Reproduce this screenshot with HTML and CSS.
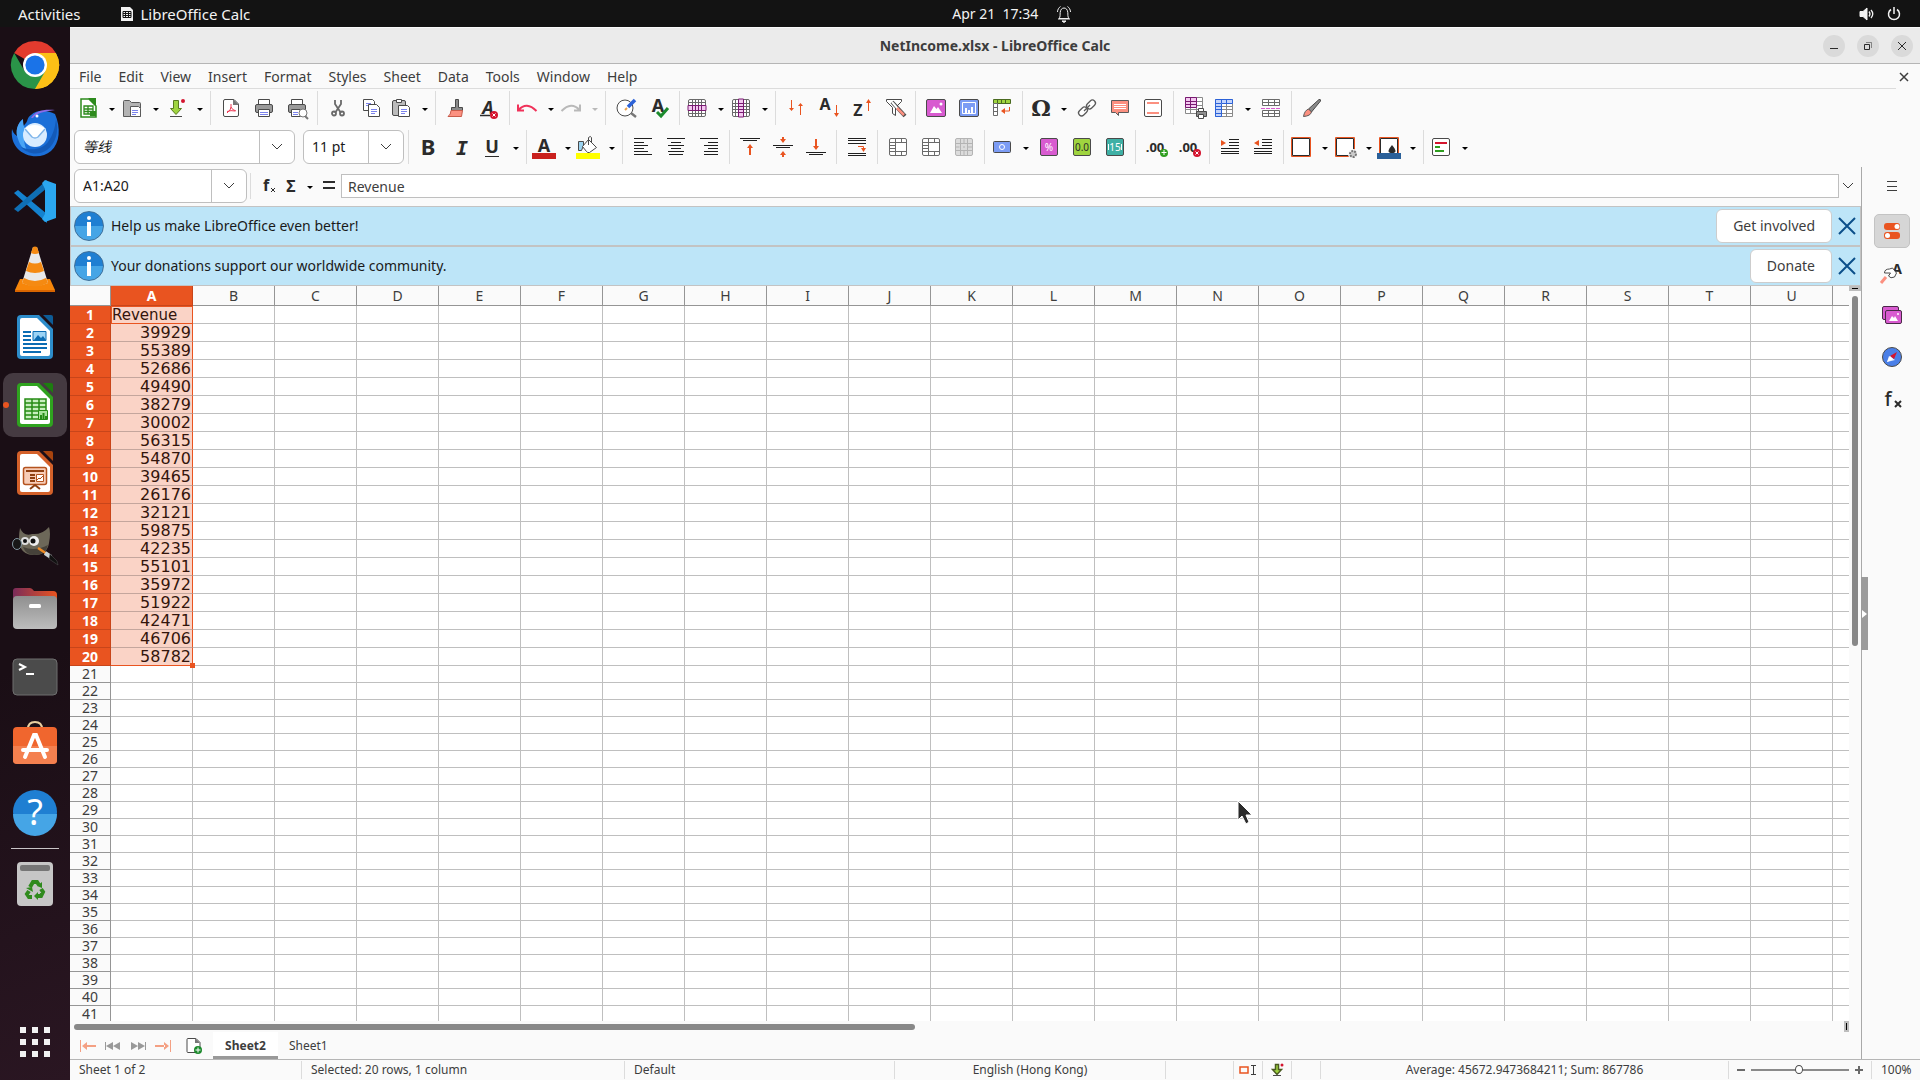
FILE: index.html
```
<!DOCTYPE html>
<html lang="en">
<head>
  <meta charset="UTF-8" />
  <meta name="viewport" content="width=device-width, initial-scale=1.0" />
  <title>NetIncome.xlsx - LibreOffice Calc</title>
  <link rel="stylesheet" href="styles.css">
</head>
<body>
  <header class="topbar">
    <div class="top-left">
      <button class="activities">Activities</button>
      <button class="app-menu">
        <svg width="13" height="14" viewBox="0 0 13 14"><path fill="#f2f2f2" d="M1 0h9l3 3v11H1z"/><path fill="none" stroke="#131313" d="M3 4.500h8v6H3zM3 6.500h8M3 8.500h8M5.500 4.500v6M8.500 4.500v6"/></svg>
        LibreOffice Calc
      </button>
    </div>
    <button class="clock">Apr 21&nbsp; 17:34
      <svg width="16" height="18" viewBox="0 0 16 18" fill="none" stroke="#f2f2f2"><path d="M3 13.500c1.500-1.500 1-4 1.200-6C4.500 4.500 6 3 8 3s3.500 1.500 3.800 4.500c.2 2-.3 4.500 1.200 6zM2 14h12M1.500 7C1.500 4.500 3 2.500 4.500 1.500M14.500 7c0-2.500-1.500-4.500-3-5.500"/><path fill="#f2f2f2" d="M6 16h4l-2 1.500z"/></svg>
    </button>
    <div class="tray">
      <svg width="16" height="14" viewBox="0 0 16 14" fill="none" stroke="#f2f2f2"><path fill="#f2f2f2" d="M1 4.500h3L8 1v12L4 9.500H1z"/><path d="M10 4.500q2 2.500 0 5M12 3q3.500 4 0 8" stroke-width="1.300"/></svg>
      <svg width="16" height="14" viewBox="0 0 16 14" fill="none" stroke="#f2f2f2" stroke-width="1.500"><path d="M5 2.500a5.500 5.500 0 1 0 6 0M8 0v7"/></svg>
    </div>
  </header>

  <div class="desktop">
    <nav class="dock" aria-label="Dock">
      <button class="app" aria-label="Chrome"><svg viewBox="0 0 48 48"><path fill="#e33b2e" d="M24 24 3.200 12A24 24 0 0 1 44.800 12z"/><path fill="#fcc016" d="M24 24 44.800 12A24 24 0 0 1 24 48z"/><path fill="#fcc016" d="M24 12h20.800A24 24 0 0 1 24 48l10.400-18z"/><path fill="#2a9448" d="M3.200 12 13.600 30 24 36l10.400-6L24 48A24 24 0 0 1 3.200 12z"/><circle cx="24" cy="24" r="12" fill="#fff"/><circle cx="24" cy="24" r="9.600" fill="#1a73e8"/></svg></button>
      <button class="app" aria-label="Thunderbird"><svg viewBox="0 0 48 48"><path fill="#1b6fd8" d="M1 20c-1 8 1 14 5 19 9 10 25 11 34 3 9-8 10-23 4-37C37 1 26 0 20 6c-4 3-3 5-5 8-4 4-4 8-3 11-2-4-2-9 0-15-5 4-7 10-6 17-3-2-4-4-5-7z"/><path fill="#4aa4f5" d="M12 10c-6 5-8 12-5 20 2 6 5 10 10 13-5-8-5-16-1-22-3-2-4-6-4-11z"/><path fill="#135ab8" d="M45 10c3 12 0 24-9 31-9 6-20 4-26-3 9 4 21 3 27-5 5-7 7-14 8-23z"/><path fill="#8c6be8" d="M20 9c4-7 12-9 24-8-9 1-19 3-22 8z"/><circle cx="24" cy="26" r="12" fill="#d9ecff"/><path fill="#fff" d="M13 20q10-8 22 0l-8 8q-3 2-6 0z"/><path fill="none" stroke="#7db4ea" stroke-width="1.500" d="m14 20 7 8q3 2 6 0l7-8"/><circle cx="26" cy="7" r="1.500" fill="#fff"/></svg></button>
      <button class="app" aria-label="Visual Studio Code"><svg viewBox="0 0 48 48"><path fill="#1482cf" d="m3 16 4-3 29 24v9z"/><path fill="#0f6fb5" d="m3 32 4 3 29-24V3z"/><path fill="#2ba7f0" d="m34 3 11 4v34l-11 4-3-3 3-5V12l-3-6z"/></svg></button>
      <button class="app" aria-label="VLC"><svg viewBox="0 0 48 48"><path fill="#f7860a" d="M9 34h30l5 11v2H4v-2z"/><path fill="#d96500" d="M4 45h40v2H4z"/><path fill="#e9e9e9" d="M22 2h4l11 36q-13 6-26 0z"/><path fill="#f58a12" d="M22 2q2-1 4 0l2 6q-4 2-8 0zM18 17q6 3 12 0l3 9q-9 4-18 0zM13 33q11 6 22 0l2 5q-13 7-26 0z"/></svg></button>
      <button class="app" aria-label="LibreOffice Writer"><svg viewBox="0 0 48 48"><rect x="6" y="2" width="36" height="44" rx="4" fill="#2d8dcb"/><path fill="#1c0f17" d="M27 1h16v16z"/><path fill="#0d5c97" d="M32 2h8q2 0 2 2v8z"/><path fill="#fff" d="M11 5h15l13 13v23q0 2-2 2H11q-2 0-2-2V7q0-2 2-2z"/><path stroke="#0b6cb3" stroke-width="2" d="M12 19h8M12 23h8M12 27h8M12 31h24M12 35h24M12 39h18"/><path fill="#9bd3f5" stroke="#0b6cb3" d="M22 18.500h13v9H22z"/><path fill="#0b6cb3" d="m23 27 4-5 3 3 2-2 3 4z"/></svg></button>
      <button class="app active" aria-label="LibreOffice Calc"><svg viewBox="0 0 48 48"><rect x="6" y="2" width="36" height="44" rx="4" fill="#2fa31f"/><path fill="#453a41" d="M27 1h16v16z"/><path fill="#1d7d10" d="M32 2h8q2 0 2 2v8z"/><path fill="#fff" d="M11 5h15l13 13v23q0 2-2 2H11q-2 0-2-2V7q0-2 2-2z"/><path fill="#c8efbf" stroke="#268c15" stroke-width="1.500" d="M14 18h21v20H14zM14 22h21M14 26h21M14 30h21M14 34h21M21 18v20M28 18v20"/><path fill="#a9e39b" stroke="#268c15" d="M27.500 29.500h9v9h-9z"/><path stroke="#268c15" stroke-width="2" d="M30 38v-4M32.500 38v-6M35 38v-3"/></svg></button>
      <button class="app" aria-label="LibreOffice Impress"><svg viewBox="0 0 48 48"><rect x="6" y="2" width="36" height="44" rx="4" fill="#d4612a"/><path fill="#1c0f17" d="M27 1h16v16z"/><path fill="#a8440e" d="M32 2h8q2 0 2 2v8z"/><path fill="#fff" d="M11 5h15l13 13v23q0 2-2 2H11q-2 0-2-2V7q0-2 2-2z"/><rect x="12.500" y="18.500" width="23" height="17" rx="2" fill="#f7cdb8" stroke="#b4531f" stroke-width="1.500"/><path fill="none" stroke="#8e3f12" stroke-width="2" d="M15 22h18M19 26h5M19 29h5M19 32h5M19 40l5-4 5 4"/><path fill="#fff" stroke="#b4531f" d="M25.500 25.500h7v7h-7zM26 31l2-2 1 1 3-3"/></svg></button>
      <button class="app" aria-label="GIMP"><svg viewBox="0 0 48 48"><path fill="#6d6859" d="M9 11q4 9 12 6 10 1 17-7 2 6 0 16-2 12-14 12-10 1-15-8-2-9 0-19z"/><path fill="#46423a" d="M12 30q12 5 25-2-2 10-14 10-8 0-11-8z"/><circle cx="14" cy="24" r="4" fill="#ddd"/><circle cx="23" cy="24" r="5" fill="#eee"/><circle cx="14" cy="24" r="2" fill="#111"/><circle cx="22" cy="24" r="2.500" fill="#111"/><ellipse cx="6" cy="27" rx="4.500" ry="5.500" fill="#171717" stroke="#8296a0"/><path stroke="#ee8a25" stroke-width="2.500" d="m27 31 9 6"/><path stroke="#c9d2d6" stroke-width="4" d="m34 36 6 4"/><path fill="#111" stroke="#555" stroke-width=".5" d="m39 37 7 7 1 4-9-6z"/></svg></button>
      <button class="app" aria-label="Files"><svg viewBox="0 0 48 48"><defs><linearGradient id="fold"><stop stop-color="#7a2c5a"/><stop offset="1" stop-color="#e95420"/></linearGradient><linearGradient id="grey" x2="0" y2="1"><stop stop-color="#8f8f8f"/><stop offset="1" stop-color="#bdbdbd"/></linearGradient></defs><path fill="url(#fold)" d="M5 3h14q2 0 4 3h19q4 0 4 4v12H2V6q0-3 3-3z"/><rect x="2" y="11" width="44" height="33" rx="4" fill="url(#grey)"/><rect x="18" y="19" width="12" height="4" rx="1.500" fill="#fff"/></svg></button>
      <button class="app" aria-label="Terminal"><svg viewBox="0 0 48 48"><rect x="2" y="6" width="44" height="36" rx="4" fill="#4b4b4b" stroke="#6f6f6f"/><path fill="none" stroke="#fff" stroke-width="2" d="m8 11 6 3-6 3M15 21h8"/></svg></button>
      <button class="app" aria-label="Ubuntu Software"><svg viewBox="0 0 48 48"><path fill="none" stroke="#e9cfa0" stroke-width="2" d="M17 8q0-7 7-7t7 7"/><rect x="2" y="6" width="44" height="37" rx="4" fill="#f0662e"/><path fill="#f4804f" d="M2 25h44v14q0 4-4 4H6q-4 0-4-4z"/><path stroke="#fff" stroke-width="4" fill="none" d="m14 36 9-22h2l9 22M12 29h24" stroke-linecap="round"/></svg></button>
      <button class="app" aria-label="Help"><svg viewBox="0 0 48 48"><circle cx="24" cy="23" r="22" fill="#1f7fd2"/><path fill="#45a5e6" d="M2 25h44a22 22 0 0 1-44 0z"/><text x="24" y="36" class="glyph help-mark">?</text></svg></button>
      <hr>
      <button class="app" aria-label="Trash"><svg viewBox="0 0 48 48"><rect x="6" y="2" width="36" height="44" rx="4" fill="#c6c6c6"/><rect x="9" y="5" width="30" height="6" rx="2" fill="#767676"/><g fill="none" stroke="#2f8a1d" stroke-width="4"><path d="m19 27 3-5h4l2 3M30 29l2 3-2 4h-4M21 37h-3l-2-3 2-3"/></g><path fill="#2f8a1d" d="m31 22 0 6-5-2zM27 32v8l-4-4zM15 28l6-1 1 5z"/></svg></button>
      <button class="app grid-btn" aria-label="Show Applications"><svg viewBox="0 0 48 48" fill="#f2f2f2"><path d="M9 9h6v6H9zM21 9h6v6h-6zM33 9h6v6h-6zM9 21h6v6H9zM21 21h6v6h-6zM33 21h6v6h-6zM9 33h6v6H9zM21 33h6v6h-6zM33 33h6v6h-6z"/></svg></button>
    </nav>

    <main class="window">
      <div class="titlebar">
        <h1>NetIncome.xlsx - LibreOffice Calc</h1>
        <div class="win-btns">
          <button aria-label="Minimize"><svg width="22" height="22"><path d="M7 13.500h8"/></svg></button>
          <button aria-label="Restore"><svg width="22" height="22"><path d="M7.500 9.500h5v5h-5z"/><path d="M9 7.500h5.500V13" opacity=".5"/></svg></button>
          <button aria-label="Close"><svg width="22" height="22"><path d="m7 7 8 8M15 7l-8 8"/></svg></button>
        </div>
      </div>

      <div class="menubar">
        <nav>
          <button>File</button><button>Edit</button><button>View</button><button>Insert</button><button>Format</button><button>Styles</button><button>Sheet</button><button>Data</button><button>Tools</button><button>Window</button><button>Help</button>
        </nav>
        <button class="doc-close" aria-label="Close document"><svg width="10" height="10" stroke="#3d3d3d" stroke-width="1.500"><path d="m1 1 8 8M9 1 1 9"/></svg></button>
      </div>

      <!-- standard toolbar -->
      <div class="toolbar">
        <div class="split"><button aria-label="New"><svg class="i" viewBox="0 0 24 24"><path fill="#fff" stroke="#2c8a1c" stroke-width="1.500" d="M5 3h8l7 7v11H5z"/><path fill="#2c8a1c" d="M12 2h8v8z"/><path fill="#fff" stroke="#2c8a1c" stroke-width="1.300" d="M8 10h9v8H8zM8 13h9M8 15.500h9M12 10v8"/><path fill="#2c8a1c" d="M14 15h6v5h-6z"/></svg></button><button class="dd" aria-label="New options"></button></div>
        <div class="split"><button aria-label="Open"><svg class="i" viewBox="0 0 24 24"><path fill="#b4b4b4" stroke="#5a5a5a" d="M3.500 20.500v-15q0-1 1-1h5l2 2h8q1 0 1 1v13z"/><path fill="#fff" stroke="#5a5a5a" d="M10.500 10.500h8l2 2v8h-10z"/><path stroke="#7b83ec" d="M12 14.500h6M12 16.500h6M12 18.500h4"/></svg></button><button class="dd" aria-label="Open options"></button></div>
        <div class="split"><button aria-label="Save"><svg class="i" viewBox="0 0 24 24"><path fill="#9fd43f" stroke="#5a7a20" d="M9.500 4.500h5v8h3L12 18.500l-5.500-6h3z"/><path stroke="#4a4a4a" d="M6 20.500h12"/><circle cx="19" cy="5" r="2" fill="#d4152f"/></svg></button><button class="dd" aria-label="Save options"></button></div>
        <span class="sep"></span>
        <button class="tb" aria-label="Export as PDF"><svg class="i" viewBox="0 0 24 24"><path fill="#fff" stroke="#4a4a4a" d="M6 3.500h9l4.500 4.500v11q0 1.500-1.500 1.500H6q-1.500 0-1.500-1.500V5q0-1.500 1.500-1.500z"/><path fill="#777" d="M14 3v6h6z"/><path fill="none" stroke="#ee3a55" d="M12 8v3q0 3-4 6M12 11q1 3 5 4M8 15.500q4-1.500 8-.5"/></svg></button>
        <button class="tb" aria-label="Print"><svg class="i" viewBox="0 0 24 24"><path fill="#fff" stroke="#4a4a4a" d="M6.500 3.500h11v5h-11z"/><rect x="3.500" y="8.500" width="17" height="8" rx="1.500" fill="#9a9a9a" stroke="#4a4a4a"/><path fill="#fff" stroke="#4a4a4a" d="M6.500 13.500h11v7h-11z"/><path stroke="#7b83ec" d="M8 16.500h8M8 18.500h8"/></svg></button>
        <button class="tb" aria-label="Print preview"><svg class="i" viewBox="0 0 24 24"><path fill="#fff" stroke="#4a4a4a" d="M6.500 3.500h11v5h-11z"/><rect x="3.500" y="8.500" width="17" height="8" rx="1.500" fill="#9a9a9a" stroke="#4a4a4a"/><path fill="#fff" stroke="#4a4a4a" d="M6.500 13.500h9v7h-9z"/><path stroke="#7b83ec" d="M8 16.500h5M8 18.500h5"/><circle cx="18" cy="17" r="4" fill="#fff" stroke="#777"/><path stroke="#777" stroke-width="2" d="m20 20 3 3"/></svg></button>
        <span class="sep"></span>
        <button class="tb" aria-label="Cut"><svg class="i" viewBox="0 0 24 24" fill="none" stroke="#6a6a6a" stroke-width="1.800"><path d="M9 4v4l6 9M15 4v4l-6 9"/><circle cx="8" cy="17.500" r="2"/><circle cx="16" cy="17.500" r="2"/></svg></button>
        <button class="tb" aria-label="Copy"><svg class="i" viewBox="0 0 24 24" fill="#fff" stroke="#4a4a4a"><path d="M4.500 3.500h9l2 2v9h-11z"/><path stroke="#7b83ec" d="M7 7.500h5M7 9.500h2"/><path d="M9.500 8.500h8l3 3v9h-11z"/><path stroke="#7b83ec" d="M12 13.500h6M12 15.500h6M12 17.500h4"/></svg></button>
        <div class="split"><button aria-label="Paste"><svg class="i" viewBox="0 0 24 24" stroke="#4a4a4a"><rect x="3.500" y="4.500" width="13" height="15" rx="1.500" fill="#bbb"/><path fill="#fff" d="M7.500 3.500h5v3h-5zM9.500 9.500h9l2 2v9h-11z"/><path stroke="#7b83ec" d="M12 13.500h6M12 15.500h6M12 17.500h4"/></svg></button><button class="dd" aria-label="Paste options"></button></div>
        <span class="sep"></span>
        <button class="tb" aria-label="Clone formatting"><svg class="i" viewBox="0 0 24 24"><path fill="#8a8a8a" stroke="#4a4a4a" d="M11.500 3.500h3v8h4v3h-11v-3h4z"/><path fill="#fb9080" stroke="#c85b4a" d="M7 14.500h11.500l-1 6H4q3-2 3-6z"/></svg></button>
        <button class="tb" aria-label="Clear formatting"><svg class="i" viewBox="0 0 24 24"><text x="11" y="18" class="glyph big it">A</text><path stroke="#2b2b2b" stroke-width="1.500" d="M3 19.500h10"/><circle cx="17" cy="19" r="4" fill="#d4152f"/><path stroke="#fff" d="m15.500 17.500 3 3M18.500 17.500l-3 3"/></svg></button>
        <span class="sep"></span>
        <div class="split"><button aria-label="Undo"><svg class="i" viewBox="0 0 24 24" fill="none" stroke="#f0325a" stroke-width="2"><path d="M3 8.500v6h6M3.500 14q8-9 18 1"/></svg></button><button class="dd" aria-label="Undo list"></button></div>
        <div class="split off"><button aria-label="Redo"><svg class="i" viewBox="0 0 24 24" fill="none" stroke="#b9b9b9" stroke-width="2"><path d="M21 8.500v6h-6M20.500 14q-8-9-18 1"/></svg></button><button class="dd" aria-label="Redo list"></button></div>
        <span class="sep"></span>
        <button class="tb" aria-label="Find and replace"><svg class="i" viewBox="0 0 24 24"><circle cx="11" cy="12" r="8" fill="#fff" stroke="#4a4a4a"/><path stroke="#777" stroke-width="2.500" d="m17 17 5 4"/><path stroke="#2c62d8" stroke-width="3.500" d="m14 11 7-7"/><path stroke="#e9a04b" stroke-width="2" d="m11 14 2-2"/></svg></button>
        <button class="tb" aria-label="Spelling"><svg class="i" viewBox="0 0 24 24"><text x="11" y="16" class="glyph big">A</text><path fill="none" stroke="#1c8a2c" stroke-width="3" d="m10 16 4 4 7-8"/></svg></button>
        <span class="sep"></span>
        <div class="split"><button aria-label="Row"><svg class="i" viewBox="0 0 24 24" fill="#fff" stroke="#6a6a6a"><rect x="3.500" y="3.500" width="17" height="17" rx="1.500"/><path d="M3.500 6.500h17M3.500 17.500h17M7.500 3.500v17M10.500 3.500v17M13.500 3.500v17M16.500 3.500v17"/><path fill="#f3c8f0" stroke="#7a1a72" d="M3 9.500h18v5H3zM7.500 10v4M10.500 10v4M13.500 10v4M16.500 10v4"/></svg></button><button class="dd" aria-label="Row options"></button></div>
        <div class="split"><button aria-label="Column"><svg class="i" viewBox="0 0 24 24" fill="#fff" stroke="#6a6a6a"><rect x="3.500" y="3.500" width="17" height="17" rx="1.500"/><path d="M3.500 7.500h17M3.500 10.500h17M3.500 13.500h17M3.500 16.500h17M6.500 3.500v17M17.500 3.500v17"/><path fill="#f3c8f0" stroke="#7a1a72" d="M9.500 3v18h5V3zM10 7.500h4M10 10.500h4M10 13.500h4M10 16.500h4"/></svg></button><button class="dd" aria-label="Column options"></button></div>
        <span class="sep"></span>
        <button class="tb" aria-label="Sort"><svg class="i" viewBox="0 0 24 24" fill="#e95420" stroke="#e95420"><path d="M7.500 4v8M16.500 9v10"/><path d="M5 12h5l-2.500 3zM14 10h5l-2.500-3z" stroke="none"/></svg></button>
        <button class="tb" aria-label="Sort ascending"><svg class="i" viewBox="0 0 24 24"><text x="8" y="14" class="glyph mid">A</text><path stroke="#e95420" d="M19.500 9v10"/><path fill="#e95420" d="M17 17h5l-2.500 4z"/></svg></button>
        <button class="tb" aria-label="Sort descending"><svg class="i" viewBox="0 0 24 24"><text x="8" y="20" class="glyph mid">Z</text><path stroke="#e95420" d="M18.500 5v10"/><path fill="#e95420" d="M16 7h5l-2.500-4z"/></svg></button>
        <button class="tb" aria-label="AutoFilter"><svg class="i" viewBox="0 0 24 24"><path fill="#fff" stroke="#4a4a4a" d="M3.500 3.500h15v2l-6 6v8l-3-2v-6l-6-6z"/><path stroke="#4a4a4a" stroke-width="4" d="m9 6 13 14"/><path stroke="#fff" stroke-width="2" d="m9 6 6 7"/><path stroke="#fb9080" stroke-width="2.500" d="m14 12 7 7"/></svg></button>
        <span class="sep"></span>
        <button class="tb" aria-label="Insert image"><svg class="i" viewBox="0 0 24 24"><rect x="2.500" y="3.500" width="19" height="17" rx="1.500" fill="#d85bd0" stroke="#4a4a4a"/><path fill="#fff" d="m6 17 4-7 2.500 3L14 11l4 6z"/><circle cx="17" cy="8" r="1.500" fill="#fff"/></svg></button>
        <button class="tb" aria-label="Insert chart"><svg class="i" viewBox="0 0 24 24"><rect x="2.500" y="3.500" width="19" height="17" rx="1.500" fill="#7c9cf4" stroke="#4a4a4a"/><path fill="none" stroke="#fff" d="M5.500 6.500h13v11h-13z"/><path stroke="#fff" stroke-width="2" d="M9 17v-5M12 17v-3M15 17v-6"/></svg></button>
        <button class="tb" aria-label="Insert pivot table"><svg class="i" viewBox="0 0 24 24"><path fill="#9fd43f" stroke="#4a6a20" d="M3.500 3.500h17v4h-17zM7.500 4v3M11.500 4v3M15.500 4v3"/><path fill="#fff" stroke="#6a6a6a" d="M3.500 7.500h4v12h-4zM4 11.500h3M4 15.500h3"/><path fill="none" stroke="#e95420" d="M19.500 11v4h-6"/><path fill="#e95420" d="M11 15l4-3v6z"/></svg></button>
        <span class="sep"></span>
        <div class="split"><button aria-label="Special character"><svg class="i" viewBox="0 0 24 24"><text x="13" y="20" class="glyph omega">Ω</text></svg></button><button class="dd" aria-label="More characters"></button></div>
        <button class="tb" aria-label="Hyperlink"><svg class="i" viewBox="0 0 24 24" fill="#fff" stroke="#5a5a5a" stroke-width="1.300"><rect x="11" y="5.500" width="10" height="6" rx="3" transform="rotate(-45 16 8.500)"/><rect x="3" y="12.500" width="10" height="6" rx="3" transform="rotate(-45 8 15.500)"/><path d="m9 15 6-6"/></svg></button>
        <button class="tb" aria-label="Comment"><svg class="i" viewBox="0 0 24 24"><path fill="#fb9080" stroke="#5a5a5a" d="M3.500 4.500h17v12h-10v3l-3-3h-4z"/><path stroke="#fff" d="M6 8.500h12M6 10.500h12M6 12.500h12"/></svg></button>
        <button class="tb" aria-label="Headers and footers"><svg class="i" viewBox="0 0 24 24"><rect x="3.500" y="3.500" width="17" height="17" rx="1.500" fill="#fff" stroke="#4a4a4a"/><path stroke="#fb9080" stroke-width="2" d="M6 7h12M6 17h12"/></svg></button>
        <span class="sep"></span>
        <button class="tb" aria-label="Define print area"><svg class="i" viewBox="0 0 24 24" fill="#fff" stroke="#8a8a8a"><path d="M3.500 1.500h17v16h-17zM4 13.500h16M8.500 12v6M14.500 2v16M14 5.500h6M14 9.500h6"/><path fill="#f3c8f0" stroke="#7a1a72" d="M3.500 1.500h11v10h-11zM4 5.500h10M4 8.500h10M8.500 2v9"/><path fill="#8f8f8f" stroke="#4a4a4a" d="M14.500 15.500h10v5h-10z"/><path stroke="#4a4a4a" d="M16.500 12.500h5v3h-5zM16.500 18.500h5v4h-5z"/></svg></button>
        <div class="split"><button aria-label="Freeze"><svg class="i" viewBox="0 0 24 24" fill="#fff" stroke="#8a8a8a"><path d="M3.500 3.500h17v17h-17zM9 10.500h11M9 13.500h11M9 17.500h11M14.500 7v13"/><path fill="#c3d4fb" stroke="#2c62d8" d="M3.500 3.500h17v4h-11v13h-6zM9.500 4v3M14.500 4v3M4 7.500h5M4 10.500h5M4 13.500h5M4 17.500h5"/></svg></button><button class="dd" aria-label="Freeze options"></button></div>
        <button class="tb" aria-label="Split window"><svg class="i" viewBox="0 0 24 24" fill="#fff" stroke="#6a6a6a"><path d="M3.500 3.500h17v6h-17zM3.500 6.500h17M9.500 4v6M15.500 4v6M3.500 14.500h17v6h-17zM3.500 17.500h17M9.500 15v6M15.500 15v6"/><path stroke="#d85bd0" stroke-dasharray="4 1" d="M2 12.500h20"/></svg></button>
        <span class="sep"></span>
        <button class="tb" aria-label="Show draw functions"><svg class="i" viewBox="0 0 24 24"><path fill="#8a8a8a" stroke="#4a4a4a" d="M19 3.500q2-.5 1.500 1.500l-9 11-3-3z"/><path fill="#fb9080" stroke="#5a5a5a" d="M3.500 20.500q1-6 5-7.500l3 3q-1 4-8 4.500z"/></svg></button>
      </div>

      <!-- formatting toolbar -->
      <div class="toolbar format">
        <div class="combo font-name"><input type="text" value="等线" aria-label="Font name"><button aria-label="Font list"><svg class="chev" viewBox="0 0 12 8"><path d="m1 1 5 5 5-5"/></svg></button></div>
        <div class="combo font-size"><input type="text" value="11 pt" aria-label="Font size"><button aria-label="Font size list"><svg class="chev" viewBox="0 0 12 8"><path d="m1 1 5 5 5-5"/></svg></button></div>
        <span class="sep"></span>
        <button class="tb" aria-label="Bold"><svg class="i" viewBox="0 0 24 24"><text x="11" y="20" class="glyph bold">B</text></svg></button>
        <button class="tb" aria-label="Italic"><svg class="i" viewBox="0 0 24 24"><text x="12" y="20" class="glyph ital">I</text></svg></button>
        <div class="split"><button aria-label="Underline"><svg class="i" viewBox="0 0 24 24"><text x="12" y="18" class="glyph big">U</text><path stroke="#2b2b2b" d="M5 21.500h14"/></svg></button><button class="dd" aria-label="Underline options"></button></div>
        <span class="sep"></span>
        <div class="split"><button aria-label="Font color"><svg class="i" viewBox="0 0 24 24"><text x="12" y="17" class="glyph big">A</text><path fill="#c9211e" d="M0 18h24v6H0z"/></svg></button><button class="dd" aria-label="Font colors"></button></div>
        <div class="split"><button aria-label="Highlight color"><svg class="i" viewBox="0 0 24 24"><path fill="#9bd3f0" stroke="#4a4a4a" d="M2.500 15.500v-9h5v4l-2 5z"/><path fill="#fff" stroke="#4a4a4a" d="m12.500 4.500 8 8-7 5q-2 .5-3-1l-4-5z"/><path fill="none" stroke="#4a4a4a" d="M12.500 10V2.500q2-2 3 0v5"/><path fill="#ff0" d="M0 18h24v6H0z"/></svg></button><button class="dd" aria-label="Highlight colors"></button></div>
        <span class="sep"></span>
        <button class="tb" aria-label="Align left"><svg class="i ln" viewBox="0 0 24 24"><path d="M3 3.500h18M3 7.500h10M3 10.500h14M3 13.500h10M3 16.500h14M3 19.500h18"/></svg></button>
        <button class="tb" aria-label="Center"><svg class="i ln" viewBox="0 0 24 24"><path d="M3 3.500h18M7 7.500h10M4 10.500h16M7 13.500h10M4 16.500h16M5 19.500h14"/></svg></button>
        <button class="tb" aria-label="Align right"><svg class="i ln" viewBox="0 0 24 24"><path d="M3 3.500h18M11 7.500h10M7 10.500h14M11 13.500h10M7 16.500h14M7 19.500h14"/></svg></button>
        <span class="sep"></span>
        <button class="tb" aria-label="Align top"><svg class="i ln" viewBox="0 0 24 24"><path d="M2 3.500h20M5 5.500h14"/><path stroke="#e95420" stroke-width="2" d="M12 20v-8"/><path fill="#e95420" stroke="none" d="M9 13h6l-3-4z"/></svg></button>
        <button class="tb" aria-label="Center vertically"><svg class="i ln" viewBox="0 0 24 24"><path d="M2 10.500h20M5 12.500h14"/><path fill="#e95420" stroke="none" d="M11 2h2v2h2l-3 4-3-4h2zM11 22h2v-2h2l-3-4-3 4h2z"/></svg></button>
        <button class="tb" aria-label="Align bottom"><svg class="i ln" viewBox="0 0 24 24"><path d="M2 17.500h20M5 19.500h14"/><path stroke="#e95420" stroke-width="2" d="M12 4v8"/><path fill="#e95420" stroke="none" d="M9 11h6l-3 4z"/></svg></button>
        <span class="sep"></span>
        <button class="tb" aria-label="Wrap text"><svg class="i ln" viewBox="0 0 24 24"><path d="M3 3.500h18M3 5.500h18M3 8.500h18M3 18.500h18M3 20.500h18"/><path stroke="#e95420" d="M13 11.500h5.500v3"/><path fill="#e95420" stroke="none" d="M16 13h5l-2.500 4z"/></svg></button>
        <span class="sep"></span>
        <button class="tb" aria-label="Merge and center"><svg class="i" viewBox="0 0 24 24" fill="#fff" stroke="#6a6a6a"><rect x="3.500" y="3.500" width="17" height="17" rx="1.500"/><path d="M3.500 7.500h17M9.500 3.500v17M15.500 3.500v4M3.500 10.500h6M3.500 13.500h6M9.500 16.500h11M3.500 16.500h6M15.500 17v3"/></svg></button>
        <button class="tb" aria-label="Merge cells"><svg class="i" viewBox="0 0 24 24" fill="#fff" stroke="#6a6a6a"><rect x="3.500" y="3.500" width="17" height="17" rx="1.500"/><path d="M3.500 7.500h17M9.500 3.500v17M15.500 3.500v4M3.500 10.500h6M3.500 13.500h6M9.500 16.500h11M3.500 16.500h6M15.500 17v3"/></svg></button>
        <button class="tb" aria-label="Split cells" disabled><svg class="i" viewBox="0 0 24 24" fill="#dcdcdc" stroke="#b4b4b4"><rect x="3.500" y="3.500" width="17" height="17" rx="1.500"/><path d="M3.500 8.500h17M3.500 15.500h17M3.500 12h4M16 12h4.500M8.500 3.500v17M15.500 3.500v17M12 4v4M12 16v4M11 12h2"/></svg></button>
        <span class="sep"></span>
        <div class="split"><button aria-label="Format as currency"><svg class="i" viewBox="0 0 24 24"><rect x="3.500" y="6.500" width="17" height="11" rx="1" fill="#7c9cf4" stroke="#4a4a4a"/><circle cx="12" cy="12" r="2.500" fill="none" stroke="#fff"/></svg></button><button class="dd" aria-label="Currencies"></button></div>
        <button class="tb" aria-label="Format as percent"><svg class="i" viewBox="0 0 24 24"><rect x="3.500" y="3.500" width="17" height="17" rx="1.500" fill="#d85bd0" stroke="#4a4a4a"/><text x="12" y="16" class="glyph small white">%</text></svg></button>
        <button class="tb" aria-label="Format as number"><svg class="i" viewBox="0 0 24 24"><rect x="3.500" y="3.500" width="17" height="17" rx="1.500" fill="#9fd43f" stroke="#4a4a4a"/><text x="12" y="16" class="glyph small">0.0</text></svg></button>
        <button class="tb" aria-label="Format as date"><svg class="i" viewBox="0 0 24 24"><rect x="3.500" y="3.500" width="17" height="17" rx="1.500" fill="#3fb0a5" stroke="#4a4a4a"/><text x="12" y="16" class="glyph small white">15</text><path stroke="#fff" d="M5.500 9v6M18.500 9v6"/></svg></button>
        <span class="sep"></span>
        <button class="tb" aria-label="Add decimal place"><svg class="i" viewBox="0 0 24 24"><text x="11" y="17" class="glyph dec">.00</text><circle cx="20" cy="18" r="4" fill="#2f9e1f"/><path stroke="#fff" d="M17.500 17.500h5M20 15v5"/></svg></button>
        <button class="tb" aria-label="Delete decimal place"><svg class="i" viewBox="0 0 24 24"><text x="11" y="17" class="glyph dec">.00</text><circle cx="20" cy="18" r="4" fill="#d4152f"/><path stroke="#fff" d="m18.500 16.500 3 3M21.500 16.500l-3 3"/></svg></button>
        <span class="sep"></span>
        <button class="tb" aria-label="Increase indent"><svg class="i ln" viewBox="0 0 24 24"><path d="M11 4.500h10M11 7.500h10M11 10.500h10M3 13.500h18M3 16.500h18M3 18.500h18"/><path fill="#e95420" stroke="none" d="M3 5v6l5-3z"/></svg></button>
        <button class="tb" aria-label="Decrease indent"><svg class="i ln" viewBox="0 0 24 24"><path d="M11 4.500h10M11 7.500h10M11 10.500h10M3 13.500h18M3 16.500h18M3 18.500h18"/><path fill="#e95420" stroke="none" d="M8 5v6L3 8z"/></svg></button>
        <span class="sep"></span>
        <div class="split"><button aria-label="Borders"><svg class="i" viewBox="0 0 24 24"><path fill="#fff" stroke="#e95420" d="M2.500 2.500h19v19h-19z"/><path fill="none" stroke="#2b2b2b" d="M3.500 3.500h17v17h-17z"/></svg></button><button class="dd" aria-label="Border options"></button></div>
        <div class="split"><button aria-label="Border style"><svg class="i" viewBox="0 0 24 24"><path fill="#fff" stroke="#e95420" d="M2.500 2.500h19v19h-19z"/><path fill="none" stroke="#2b2b2b" d="M3.500 3.500h17v17h-17z"/><circle cx="20" cy="19" r="5" fill="#fafafa"/><circle cx="20" cy="19" r="3" fill="#ccc" stroke="#777" stroke-width="2" stroke-dasharray="2 1"/></svg></button><button class="dd" aria-label="Border styles"></button></div>
        <div class="split"><button aria-label="Border color"><svg class="i" viewBox="0 0 24 24"><path fill="#fff" stroke="#e95420" d="M2.500 2.500h19v19h-19z"/><path fill="none" stroke="#2b2b2b" d="M3.500 20.500v-17h17v17"/><path fill="#2b2b2b" d="M15 10q7 8 0 8t0-8z"/><path fill="#2a6099" d="M0 18h24v6H0z"/></svg></button><button class="dd" aria-label="Border colors"></button></div>
        <span class="sep"></span>
        <div class="split"><button aria-label="Conditional formatting"><svg class="i" viewBox="0 0 24 24"><rect x="3.500" y="3.500" width="17" height="17" rx="1.500" fill="#fff" stroke="#4a4a4a"/><path stroke="#d4152f" stroke-width="2" d="M6 8h12"/><path stroke="#2f9e1f" stroke-width="2" d="M6 12h5M6 16h9"/></svg></button><button class="dd" aria-label="Conditional formatting options"></button></div>
      </div>

      <div class="main">
        <section class="work">
          <div class="formula">
            <div class="combo name-box"><input type="text" value="A1:A20" aria-label="Name box"><button aria-label="Named ranges"><svg class="chev" viewBox="0 0 12 8"><path d="m1 1 5 5 5-5"/></svg></button></div>
            <span class="sep short"></span>
            <button class="fbtn" aria-label="Function wizard"><svg class="i" viewBox="0 0 24 24"><text x="11" y="17" class="glyph func">f</text><path stroke="#2b2b2b" d="m16 14 4 4M20 14l-4 4"/></svg></button>
            <button class="fbtn narrow" aria-label="Select function"><svg class="i" viewBox="0 0 24 24"><text x="12" y="18" class="glyph mid">Σ</text></svg></button>
            <button class="dd" aria-label="Functions"></button>
            <button class="fbtn" aria-label="Formula"><svg class="i" viewBox="0 0 24 24"><path stroke="#2b2b2b" stroke-width="2" d="M6 8h12M6 14h12"/></svg></button>
            <input type="text" class="formula-input" value="Revenue" aria-label="Input line">
            <button class="expand" aria-label="Expand formula bar"><svg class="chev" viewBox="0 0 12 8"><path d="m1 1 5 5 5-5"/></svg></button>
          </div>

          <div class="infobar">
            <span class="info-icon"><i></i></span>
            <p>Help us make LibreOffice even better!</p>
            <button class="info-btn">Get involved</button>
            <button class="info-x" aria-label="Close infobar"><svg width="18" height="18" stroke="#0b4f8a" stroke-width="2"><path d="m1 1 16 16M17 1 1 17"/></svg></button>
          </div>
          <div class="infobar">
            <span class="info-icon"><i></i></span>
            <p>Your donations support our worldwide community.</p>
            <button class="info-btn">Donate</button>
            <button class="info-x" aria-label="Close infobar"><svg width="18" height="18" stroke="#0b4f8a" stroke-width="2"><path d="m1 1 16 16M17 1 1 17"/></svg></button>
          </div>

          <div class="sheet-row">
            <div class="grid"><table id="sheet"></table></div>
            <div class="vscroll"><span class="splitter"></span><span class="thumb"></span></div>
          </div>
          <div class="hscroll"><span class="thumb"></span><span class="splitter"></span></div>

          <div class="tabs">
            <button class="nav" aria-label="First sheet"><svg width="16" height="12" viewBox="0 0 16 12"><path fill="#f4a083" d="M0 0h1v12H0zM6 5h10v2H6zM2 6l5-4v8z"/></svg></button>
            <button class="nav" aria-label="Previous sheet"><svg width="16" height="12" viewBox="0 0 16 12"><path fill="#999" d="M0 2h1v8H0zM1 6l7-4v8zM8 6l7-4v8z"/></svg></button>
            <button class="nav" aria-label="Next sheet"><svg width="16" height="12" viewBox="0 0 16 12"><path fill="#999" d="M15 2h1v8h-1zM15 6 8 2v8zM8 6 1 2v8z"/></svg></button>
            <button class="nav" aria-label="Last sheet"><svg width="16" height="12" viewBox="0 0 16 12"><path fill="#f4a083" d="M15 0h1v12h-1zM0 5h10v2H0zM14 6 9 2v8z"/></svg></button>
            <button class="add" aria-label="Add sheet"><svg width="16" height="18" viewBox="0 0 16 18"><path fill="#fff" stroke="#4a4a4a" d="M2 1.500h8l4 4v10H2q-1 0-1-1v-12q0-1 1-1z"/><path fill="#777" d="M9 1v5h5z"/><circle cx="12" cy="13" r="4" fill="#1c8a2c"/><path stroke="#fff" d="M9.500 13h5M12 10.500v5"/></svg></button>
            <button class="tab current">Sheet2</button>
            <button class="tab">Sheet1</button>
          </div>
        </section>

        <aside class="sidebar">
          <button aria-label="Sidebar settings"><svg width="24" height="24" stroke="#3d3d3d"><path d="M7 7.500h10M7 12.500h10M7 16.500h10"/></svg></button>
          <button class="on" aria-label="Properties"><svg width="24" height="24"><rect x="4" y="4" width="16" height="7" rx="3" fill="#e95420"/><rect x="4" y="13" width="16" height="7" rx="3" fill="#e95420"/><circle cx="17" cy="7.500" r="2.500" fill="#fff"/><circle cx="7.500" cy="16.500" r="2.500" fill="#fff"/></svg></button>
          <button aria-label="Styles"><svg width="24" height="24"><text x="17" y="13" class="glyph styles-a">A</text><path fill="#fff" stroke="#4a4a4a" d="M4.500 12q0-4 5-4l3-1 4 5-2 4q-4 2-6-1l2-3z"/><path stroke="#fb9080" stroke-width="3" d="m1 22 5-6"/></svg></button>
          <button aria-label="Gallery"><svg width="24" height="24" stroke="#4a2a48"><rect x="2.500" y="3.500" width="16" height="13" rx="1.500" fill="#d85bd0"/><rect x="5.500" y="7.500" width="16" height="13" rx="1.500" fill="#d85bd0"/><path fill="#fff" stroke="none" d="m9 18 3-5 2 2 1-2 3 5z"/><circle cx="18" cy="11" r="1" fill="#fff" stroke="none"/></svg></button>
          <button aria-label="Navigator"><svg width="24" height="24"><circle cx="12" cy="12" r="9.500" fill="#4a7fe8" stroke="#4a4a4a"/><path fill="#e8effc" d="m7 17 2-6 6 4z"/><path fill="#d4152f" d="m10 11 7-4-3 7z"/><path fill="#fff" d="m7 17 3-6 3 3z"/></svg></button>
          <button aria-label="Functions"><svg width="24" height="24"><text x="8" y="19" class="glyph side-f">f</text><path stroke="#2b2b2b" stroke-width="2" d="m15 14 6 6M21 14l-6 6"/></svg></button>
          <span class="handle"></span>
        </aside>
      </div>

      <footer class="status">
        <span class="s-sheet">Sheet 1 of 2</span>
        <span class="s-sel">Selected: 20 rows, 1 column</span>
        <span class="s-style">Default</span>
        <span class="s-lang">English (Hong Kong)</span>
        <span class="s-empty"></span>
        <span class="s-ico"><svg width="20" height="12" fill="none"><path stroke="#e95420" stroke-width="1.500" d="M2 3h8v6H2z"/><path stroke="#3d3d3d" d="M13 1.500h5M13 10.500h5M15.500 2v8"/></svg></span>
        <span class="s-ico"><svg width="14" height="14"><path fill="#9fd43f" stroke="#4a5a20" stroke-width="1.500" d="M5.500 1.500h3v5h3L7 11.500l-4.500-5h3z"/><path stroke="#4a4a4a" d="M3 12.500h8"/><circle cx="12" cy="2" r="1.500" fill="#d4152f"/></svg></span>
        <span class="s-ico"></span>
        <span class="s-sum">Average: 45672.9473684211; Sum: 867786</span>
        <span class="s-zoom"><button aria-label="Zoom out"><svg width="8" height="8"><path fill="#6a6a6a" d="M0 3h8v2H0z"/></svg></button><input type="range" min="0" max="100" value="49" aria-label="Zoom"><button aria-label="Zoom in"><svg width="8" height="8"><path fill="#6a6a6a" d="M0 3h8v2H0zM3 0h2v8H3z"/></svg></button></span>
        <span class="s-pct">100%</span>
      </footer>
    </main>
  </div>

  <svg class="pointer" width="18" height="26" viewBox="0 0 18 26"><path fill="#2b2b2b" stroke="#fff" d="M1 1v19l4-4 4 8 3-2-3-7h6z"/></svg>

  <script>
    // build the sheet
    const revenue=[39929,55389,52686,49490,38279,30002,56315,54870,39465,26176,32121,59875,42235,55101,35972,51922,42471,46706,58782];
    const cols=[...'ABCDEFGHIJKLMNOPQRSTUV'];
    const values=['Revenue',...revenue];
    let html='<thead><tr><th class="corner"></th>'+cols.map((c,i)=>`<th class="${i?'':'sel'}" scope="col">${c}</th>`).join('')+'</tr></thead><tbody>';
    for(let r=1;r<=41;r++){
      const used=r<=values.length;
      html+=`<tr class="${used?'used':''}"><th scope="row">${r}</th>`;
      cols.forEach((c,i)=>{
        const cls=i===0&&used?(r===1?'picked first':r===values.length?'picked last':'picked'):'';
        html+=`<td class="${cls}">${i===0&&used?values[r-1]:''}</td>`;
      });
      html+='</tr>';
    }
    document.getElementById('sheet').innerHTML=html+'</tbody>';
  </script>
</body>
</html>
```
FILE: styles.css
```
:root{--orange:#e95420;--bg:#fafafa;--line:#bfbfbf;--text:#3d3d3d;--ui:"Noto Sans","Noto Sans CJK SC",sans-serif}
*,*::before,*::after{box-sizing:border-box;margin:0;padding:0}
body{height:100vh;display:flex;flex-direction:column;overflow:hidden;background:#1c0f17;color:var(--text);font-family:var(--ui);font-size:14px;line-height:20px}
button,input{font:inherit;color:inherit;border:none;background:none}
svg{display:block;flex:none;overflow:visible}

/* top panel */
.topbar{display:flex;align-items:center;height:27px;flex:none;background:#131313;color:#f2f2f2}
.topbar button{display:flex;align-items:center}
.top-left{display:flex;width:49.6%;padding-left:18px;gap:39px}
.top-left button{font-size:15px}
.app-menu{gap:8px}
.clock{gap:18px}
.tray{display:flex;gap:11px;margin-left:auto;padding-right:18px}

.desktop{flex:1;display:flex;min-height:0}

/* dock */
.dock{width:70px;flex:none;display:flex;flex-direction:column;align-items:center;padding-top:4px;background:linear-gradient(160deg,#1a0e15 60%,#2a1622)}
.app{width:64px;height:64px;margin:2px 0;flex:none;display:flex;align-items:center;justify-content:center;border-radius:10px;position:relative}
.app svg{width:48px;height:48px}
.app.active{background:#453a41}
.app.active::before{content:"";position:absolute;left:0;top:29px;width:6px;height:6px;border-radius:50%;background:var(--orange)}
.dock hr{width:48px;height:1px;border:none;background:#c9c5c7;margin:1px 0}
.grid-btn{margin-top:auto;margin-bottom:6px}

/* window */
.window{flex:1;min-width:0;display:flex;flex-direction:column;background:var(--bg)}
.titlebar{height:37px;flex:none;display:flex;align-items:center;justify-content:center;background:#ebebeb;border-top:1px solid #f8f8f8;border-bottom:1px solid #b5b5b5;position:relative}
.titlebar h1{font-size:14px;font-weight:700}
.win-btns{position:absolute;right:7px;display:flex;gap:12px}
.win-btns button{width:22px;height:22px;border-radius:50%;background:#dadada}
.win-btns svg{fill:none;stroke:#2b2b2b}
.menubar{height:25px;flex:none;display:flex;align-items:center;justify-content:space-between;padding-right:11px;position:relative}
.menubar::after{content:"";position:absolute;left:0;right:24px;bottom:0;height:1px;background:#dcdcdc}
.menubar nav{display:flex;gap:17px;padding-left:9px}

/* toolbars */
.toolbar{height:39px;flex:none;display:flex;align-items:center;padding:0 0 1px 5px}
.toolbar.format{padding-left:4px}
.i{width:24px;height:24px;margin-right:2px}
.tb{width:33px;height:34px;display:flex;align-items:center;justify-content:center}
.split{display:flex;width:44px}
.split button{width:28px;height:34px;display:flex;align-items:center;justify-content:center}
.split .dd,.dd{width:16px;height:34px;display:flex;align-items:center;justify-content:center}
.dd::after{content:"";border:3px solid transparent;border-top-color:#000;border-bottom:none;margin:3px 0 0 1px}
.off .dd::after{border-top-color:#b9b9b9}
.sep{width:1px;height:34px;margin:0 4px 0 3px;background:#dcdcdc}
.combo{display:flex;height:34px;border:1px solid var(--line);border-radius:6px;background:#fff;color:#1a1a1a}
.combo input{flex:1;min-width:0;padding-left:8px}
.combo button{width:35px;display:flex;align-items:center;justify-content:center;border-left:1px solid var(--line)}
.font-name{width:221px;margin-right:8px}
.font-name input{font-style:italic}
.font-size{width:101px;margin-right:1px}
.chev{width:12px;height:8px;fill:none;stroke:#3d3d3d}
.ln{stroke:#1f1f1f;fill:none}

.glyph{font-family:var(--ui);font-weight:700;fill:#2b2b2b;text-anchor:middle}
.big{font-size:18px}
.it,.ital{font-style:italic}
.mid{font-size:16px}
.bold{font-size:22px}
.ital{font-family:"DejaVu Sans Mono",monospace;font-size:20px}
.omega{font-family:"DejaVu Serif",serif;font-size:22px}
.small{font-size:10px;font-weight:400}
.white{fill:#fff}
.dec{font-size:13px}
.func{font-size:16px}
.side-f{font-size:20px;font-weight:500}
.styles-a{font-size:14px}
.help-mark{font-size:36px;font-weight:400;fill:#fff}

/* work area */
.main{flex:1;min-height:0;display:flex}
.work{flex:1;min-width:0;display:flex;flex-direction:column}
.formula{height:39px;flex:none;display:flex;align-items:center;padding:0 0 1px 4px}
.name-box{width:173px}
.sep.short{height:26px}
.fbtn{width:24px;height:34px;display:flex;align-items:center}
.fbtn.narrow{width:22px}
.formula-input{flex:1;min-width:0;height:24px;border:1px solid var(--line);background:#fff;padding-left:6px}
.expand{width:22px;display:flex;justify-content:center;padding-right:4px}
.infobar{height:40px;flex:none;display:flex;align-items:center;padding-left:3px;border:1px solid #c3c3c3;background:#bde5f8;color:#1a1a1a}
.infobar p{flex:1;padding-left:7px}
.info-icon{width:30px;height:30px;border:1px solid #3f6f99;border-radius:50%;background:linear-gradient(#1f7fd2 50%,#45a5e6 50%);display:flex;flex-direction:column;align-items:center;padding-top:4px}
.info-icon::before{content:"";width:4px;height:4px;border-radius:50%;background:#fff}
.info-icon i{width:4px;height:14px;margin-top:2px;background:#fff}
.info-btn{height:34px;padding:0 16px;border:1px solid #cdcdcd;border-radius:6px;background:#fff;color:var(--text)}
.info-x{width:28px;display:flex;justify-content:center;padding-left:2px}

.sheet-row{flex:1;min-height:0;display:flex}
.grid{flex:1;min-width:0;overflow:hidden;background:#fff}
table{width:1845px;table-layout:fixed;border-collapse:separate;border-spacing:0}
th{font-weight:400;line-height:16px;background:var(--bg);border-right:1px solid #959595;border-bottom:1px solid #959595}
thead th{width:82px;height:20px}
thead .corner{width:41px}
tbody tr{height:17px}
tbody .used{height:18px}
td{border-right:1px solid var(--line);border-bottom:1px solid var(--line);font-family:"DejaVu Sans",sans-serif;font-size:16px;line-height:16px;text-align:right}
th.sel,.used th{background:var(--orange);color:#fff;font-weight:700;border-color:#c8451a}
td.picked{background:#fad3c6;color:#33150c;border-right-color:var(--orange);border-bottom-color:#c4a69d;padding-right:1px}
td.first{font-size:15px;text-align:left;padding-left:1px;outline:1px solid var(--orange);outline-offset:-1px}
td.last{border-bottom-color:var(--orange);position:relative}
td.last::after{content:"";position:absolute;right:-3px;bottom:-3px;width:5px;height:5px;background:var(--orange)}

.vscroll{width:12px;display:flex;flex-direction:column;align-items:center}
.vscroll .splitter{width:12px;height:5px;background:linear-gradient(#000,#000) center/6px 1px no-repeat #bdbdbd}
.vscroll .thumb{width:6px;height:47.6%;margin-top:5px;border-radius:3px;background:#888}
.hscroll{height:11px;flex:none;display:flex;align-items:center;justify-content:space-between;padding:0 12px 0 4px}
.hscroll .thumb{width:47.4%;height:6px;border-radius:3px;background:#888}
.hscroll .splitter{width:5px;height:11px;background:linear-gradient(#000,#000) center/1px 7px no-repeat #bdbdbd}
.tabs{height:27px;flex:none;display:flex;align-items:stretch;padding-left:5px}
.nav{width:25px;display:flex;align-items:center;justify-content:center}
.add{width:38px;display:flex;align-items:center;justify-content:center}
.tab{padding:0 11px;font-size:12px}
.tab.current{font-weight:700;background:#fff;border-bottom:3px solid #999;padding-top:3px;width:65px}

/* sidebar */
.sidebar{width:59px;flex:none;display:flex;flex-direction:column;align-items:center;gap:8px;padding-top:2px;border-left:1px solid #a9a9a9;position:relative}
.sidebar button{width:36px;height:34px;display:flex;align-items:center;justify-content:center;border-radius:5px;margin-left:1px}
.sidebar button.on{margin-top:3px;background:#d6d6d6;border:1px solid #c3c3c3}
.handle{position:absolute;left:-1px;top:46%;width:7px;height:73px;background:#9b9b9b}
.handle::after{content:"";position:absolute;left:1px;top:33px;border:4px solid transparent;border-left:5px solid #fff;border-right:none}

/* status bar */
.status{height:21px;flex:none;display:flex;align-items:center;border-top:1px solid #b5b5b5;font-size:12px}
.status>span{height:18px;line-height:18px;border-right:1px solid #dcdcdc;white-space:nowrap;padding-left:9px}
.s-sheet{width:232px}
.s-sel{width:323px}
.s-style{width:270px}
.status .s-lang{width:271px;text-align:center;padding:0}
.s-empty{width:68px}
.status .s-ico{width:29px;display:flex;align-items:center;justify-content:center;padding:0}
.status .s-sum{flex:1;text-align:center;padding:0}
.s-zoom{width:143px;display:flex;align-items:center;justify-content:center}
.status .s-zoom{padding:0}
.s-zoom input{-webkit-appearance:none;appearance:none;width:98px;height:12px;margin:0 6px}
.s-zoom input::-webkit-slider-runnable-track{height:2px;background:#8a8a8a}
.s-zoom input::-webkit-slider-thumb{-webkit-appearance:none;width:8px;height:9px;margin-top:-4px;border:1px solid #4a4a4a;border-radius:50%;background:#fff}
.status .s-pct{width:48px;border:none}

.pointer{position:absolute;left:1237px;top:800px}
```
